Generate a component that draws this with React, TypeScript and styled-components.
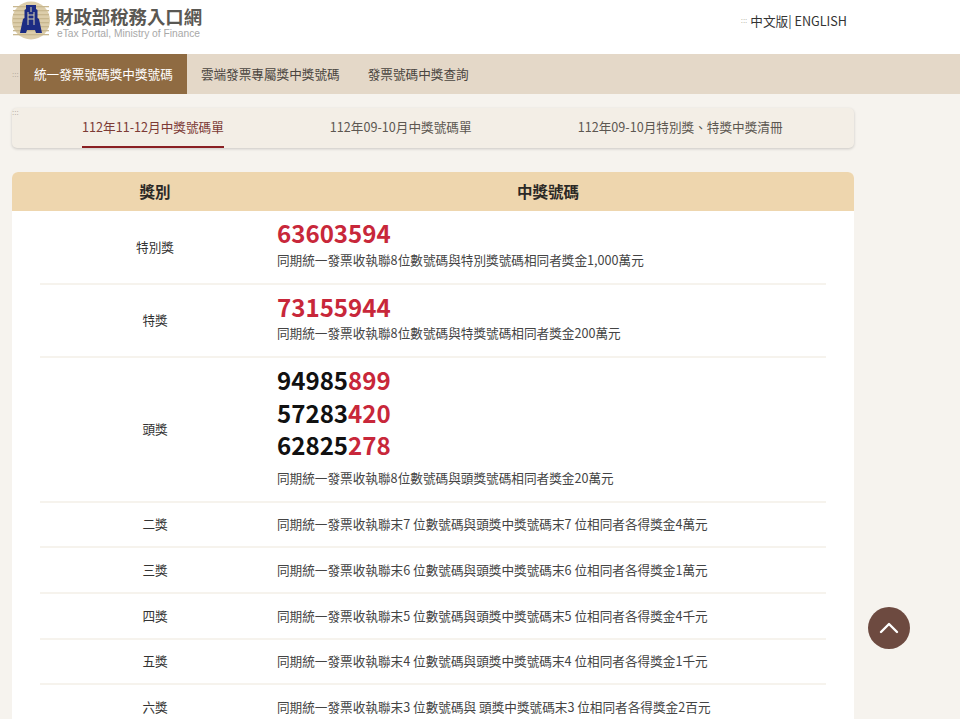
import styled, { createGlobalStyle } from "styled-components";

const GlobalStyle = createGlobalStyle`
  html, body {
    margin: 0;
    padding: 0;
    height: 719px;
    overflow: hidden;
    background: #f6f3ee;
    font-family: "Noto Sans CJK TC", "Noto Sans", sans-serif;
  }
`;

const Page = styled.div`
  width: 960px;
  height: 719px;
  overflow: hidden;
  position: relative;
`;

const Header = styled.header`
  height: 54px;
  background: #fff;
  display: flex;
  justify-content: space-between;
  padding: 0 113px 0 12px;
  box-sizing: border-box;
`;

const LogoWrap = styled.div`
  display: flex;
  align-items: flex-start;
  gap: 5px;
  padding-top: 1px;
`;

const LogoText = styled.div`
  display: flex;
  flex-direction: column;
  padding-top: 3px;
`;

const LogoTitle = styled.div`
  font-size: 18.4px;
  line-height: 24px;
  font-weight: 700;
  color: #5a5853;
  white-space: nowrap;
`;

const LogoSub = styled.div`
  font-family: "Liberation Sans", sans-serif;
  font-size: 10.25px;
  line-height: 12px;
  color: #a8a8a8;
  margin-left: 2px;
  white-space: nowrap;
`;

const Lang = styled.div`
  display: flex;
  align-items: center;
  height: 40px;
  font-size: 12.63px;
  color: #333;
  white-space: nowrap;
`;

const Dots = styled.span`
  font-family: "Liberation Sans", sans-serif;
  font-size: 8px;
  color: #a59b8c;
`;

const LangDots = styled(Dots)`
  margin-right: 3px;
`;

const Nav = styled.nav`
  height: 40px;
  background: #e4d8c8;
  display: flex;
  align-items: stretch;
  padding-left: 12px;
`;

const NavDots = styled(Dots)`
  width: 8px;
  align-self: center;
`;

const NavItem = styled.a<{ $active?: boolean }>`
  display: flex;
  align-items: center;
  padding: 0 14px 2px;
  font-size: 12.63px;
  white-space: nowrap;
  background: ${(p) => (p.$active ? "#8f6b42" : "transparent")};
  color: ${(p) => (p.$active ? "#fff" : "#4a4540")};
`;

const Main = styled.main`
  width: 842px;
  margin-left: 12px;
`;

const Tabs = styled.div`
  position: relative;
  margin-top: 14px;
  height: 40px;
  background: #f3eee6;
  border-radius: 5px;
  box-shadow: 0 1px 3px rgba(0, 0, 0, 0.18);
  display: flex;
  gap: 106px;
  padding-left: 70px;
  box-sizing: border-box;
`;

const TabDots = styled(Dots)`
  position: absolute;
  left: 0;
  top: 0;
`;

const Tab = styled.a<{ $active?: boolean }>`
  display: flex;
  align-items: center;
  height: 40px;
  box-sizing: border-box;
  padding-bottom: 2px;
  font-size: 12.63px;
  white-space: nowrap;
  color: ${(p) => (p.$active ? "#7c3a35" : "#5c5751")};
  border-bottom: 2px solid ${(p) => (p.$active ? "#8a1f22" : "transparent")};
`;

const Table = styled.section`
  margin-top: 24px;
  background: #fff;
  border-radius: 6px 6px 0 0;
`;

const Head = styled.div`
  height: 39px;
  background: #eed6ae;
  border-radius: 6px 6px 0 0;
  display: grid;
  grid-template-columns: 286px 1fr;
  font-size: 15.5px;
  font-weight: 700;
  color: #2b2926;
  padding: 0 56px 2px 0;
  box-sizing: border-box;
  align-items: center;
  text-align: center;
`;

const Rows = styled.div`
  padding: 0 28px;
`;

const Row = styled.div<{ $h: number }>`
  height: ${(p) => p.$h}px;
  box-sizing: border-box;
  display: grid;
  grid-template-columns: 230px 1fr;
  align-items: center;
  border-bottom: 2px solid #f6f3ed;
`;

const Label = styled.div`
  text-align: center;
  font-size: 12.63px;
  color: #333;
  padding-bottom: 2px;
`;

const Cell = styled.div<{ $lift?: boolean }>`
  padding-left: 7px;
  padding-bottom: ${(p) => (p.$lift ? 8 : 2)}px;
`;

const NumLine = styled.div`
  font-size: 24.1px;
  line-height: 32.6px;
  font-weight: 700;
  color: #111;
`;

const Red = styled.span`
  color: #c8273a;
`;

const Desc = styled.div<{ $top?: number }>`
  font-size: 12.63px;
  line-height: 19px;
  color: #444;
  white-space: nowrap;
  margin-top: ${(p) => p.$top ?? 0}px;
`;

const TopButton = styled.button`
  position: absolute;
  left: 868px;
  top: 607px;
  width: 42px;
  height: 42px;
  border: 0;
  padding: 0;
  border-radius: 50%;
  background: #6d4a40;
  display: flex;
  align-items: center;
  justify-content: center;
`;

function Logo() {
  return (
    <svg width="38" height="39" viewBox="0 0 38 39">
      <circle cx="19" cy="19.5" r="19" fill="#dccdaa" />
      {[5, 9, 13, 17, 21, 25, 29, 33].map((y) => (
        <rect key={y} x="1" y={y} width="36" height="1.3" fill="#c8b78f" />
      ))}
      <path
        d="M14 4h10v4l1.5 1v8l1.5 1 3 14h-6l-1-3H15l-1 3H8l3-14 1.5-1V9L14 8z"
        fill="#1c2c84"
      />
      <path d="M16 11v13M22 11v13M16 14h6M16 18h6M19 6v5" stroke="#d8cfb0" strokeWidth="1" fill="none" />
    </svg>
  );
}

const prizes = [
  { label: "二獎", n: 7, amount: "4萬元", h: 45 },
  { label: "三獎", n: 6, amount: "1萬元", h: 46 },
  { label: "四獎", n: 5, amount: "4千元", h: 46 },
  { label: "五獎", n: 4, amount: "1千元", h: 45 },
];

export default function App() {
  return (
    <Page>
      <GlobalStyle />
      <Header>
        <LogoWrap>
          <Logo />
          <LogoText>
            <LogoTitle>財政部稅務入口網</LogoTitle>
            <LogoSub>eTax Portal, Ministry of Finance</LogoSub>
          </LogoText>
        </LogoWrap>
        <Lang>
          <LangDots>:::</LangDots>中文版| ENGLISH
        </Lang>
      </Header>
      <Nav>
        <NavDots>:::</NavDots>
        <NavItem $active>統一發票號碼獎中獎號碼</NavItem>
        <NavItem>雲端發票專屬獎中獎號碼</NavItem>
        <NavItem>發票號碼中獎查詢</NavItem>
      </Nav>
      <Main>
        <Tabs>
          <TabDots>:::</TabDots>
          <Tab $active>112年11-12月中獎號碼單</Tab>
          <Tab>112年09-10月中獎號碼單</Tab>
          <Tab>112年09-10月特別獎、特獎中獎清冊</Tab>
        </Tabs>
        <Table>
          <Head>
            <div>獎別</div>
            <div>中獎號碼</div>
          </Head>
          <Rows>
            <Row $h={74}>
              <Label>特別獎</Label>
              <Cell $lift>
                <NumLine>
                  <Red>63603594</Red>
                </NumLine>
                <Desc>同期統一發票收執聯8位數號碼與特別獎號碼相同者獎金1,000萬元</Desc>
              </Cell>
            </Row>
            <Row $h={73}>
              <Label>特獎</Label>
              <Cell $lift>
                <NumLine>
                  <Red>73155944</Red>
                </NumLine>
                <Desc>同期統一發票收執聯8位數號碼與特獎號碼相同者獎金200萬元</Desc>
              </Cell>
            </Row>
            <Row $h={145}>
              <Label>頭獎</Label>
              <Cell $lift>
                <NumLine>
                  94985<Red>899</Red>
                </NumLine>
                <NumLine>
                  57283<Red>420</Red>
                </NumLine>
                <NumLine>
                  62825<Red>278</Red>
                </NumLine>
                <Desc $top={6}>同期統一發票收執聯8位數號碼與頭獎號碼相同者獎金20萬元</Desc>
              </Cell>
            </Row>
            {prizes.map((p) => (
              <Row key={p.label} $h={p.h}>
                <Label>{p.label}</Label>
                <Cell>
                  <Desc>
                    同期統一發票收執聯末{p.n} 位數號碼與頭獎中獎號碼末{p.n} 位相同者各得獎金{p.amount}
                  </Desc>
                </Cell>
              </Row>
            ))}
            <Row $h={46}>
              <Label>六獎</Label>
              <Cell>
                <Desc>同期統一發票收執聯末3 位數號碼與 頭獎中獎號碼末3 位相同者各得獎金2百元</Desc>
              </Cell>
            </Row>
          </Rows>
        </Table>
      </Main>
      <TopButton aria-label="top">
        <svg width="22" height="14" viewBox="0 0 22 14">
          <path d="M3 11 11 3l8 8" fill="none" stroke="#fff" strokeWidth="2.4" strokeLinecap="round" strokeLinejoin="round" />
        </svg>
      </TopButton>
    </Page>
  );
}
